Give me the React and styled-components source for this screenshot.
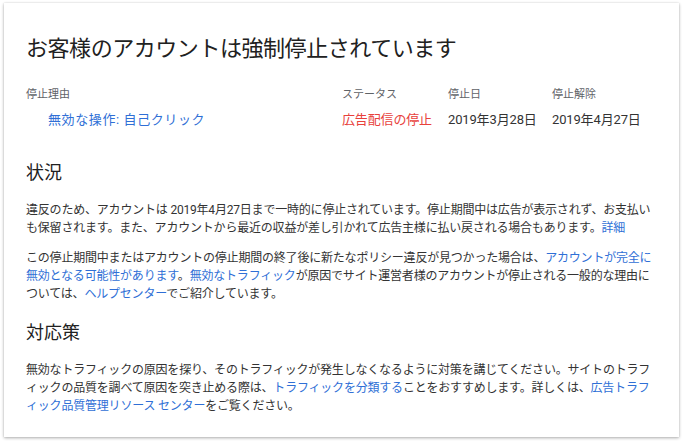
import React from "react";
import styled, { createGlobalStyle } from "styled-components";

const GlobalStyle = createGlobalStyle`
  html, body { margin: 0; padding: 0; background: #ffffff; }
  body {
    font-family: "Roboto", "Noto Sans CJK JP", "Noto Sans", sans-serif;
    color: #212121;
    -webkit-font-smoothing: antialiased;
  }
`;

const Page = styled.div`
  padding: 3px 5px 6px 4px;
`;

const Card = styled.section`
  background: #ffffff;
  box-shadow: 0 1px 3px rgba(0, 0, 0, 0.32), 0 0 1px rgba(0, 0, 0, 0.12);
  padding: 31px 10px 22px 22px;
`;

const Title = styled.h1`
  margin: 0;
  font-size: 22px;
  line-height: 30px;
  font-weight: 400;
  letter-spacing: -0.45px;
  color: #212121;
`;

const MetaGrid = styled.div`
  display: grid;
  grid-template-columns: 316px 106px 104px auto;
  row-gap: 8px;
  margin: 23px 0 32px;
`;

const Label = styled.div`
  font-size: 11px;
  line-height: 16px;
  color: #5f6368;
`;

const tones = {
  link: "#2f6fd6",
  alert: "#e8413c",
  plain: "#333333",
};

const Value = styled.div`
  font-size: 13px;
  line-height: 18px;
  letter-spacing: ${(p) => (p.$indent ? "0.6px" : "-0.15px")};
  color: ${(p) => tones[p.$tone || "plain"]};
  padding-left: ${(p) => (p.$indent ? "22px" : "0")};
  white-space: nowrap;
`;

const Heading = styled.h2`
  margin: 18px 0 16px;
  font-size: 18px;
  line-height: 24px;
  font-weight: 400;
  color: #212121;
`;

const Para = styled.p`
  margin: 0 0 12px;
  font-size: 12px;
  line-height: 18px;
  letter-spacing: -0.2px;
  color: #333333;
  white-space: nowrap;

  &:last-child {
    margin-bottom: 0;
  }
`;

const Link = styled.a`
  color: #2f6fd6;
  text-decoration: none;
  cursor: pointer;
`;

export default function App() {
  return (
    <>
      <GlobalStyle />
      <Page>
        <Card>
          <Title>お客様のアカウントは強制停止されています</Title>

          <MetaGrid>
            <Label>停止理由</Label>
            <Label>ステータス</Label>
            <Label>停止日</Label>
            <Label>停止解除</Label>
            <Value $tone="link" $indent>無効な操作: 自己クリック</Value>
            <Value $tone="alert">広告配信の停止</Value>
            <Value>2019年3月28日</Value>
            <Value>2019年4月27日</Value>
          </MetaGrid>

          <Heading>状況</Heading>
          <Para>
            違反のため、アカウントは 2019年4月27日まで一時的に停止されています。停止期間中は広告が表示されず、お支払い
            <br />
            も保留されます。また、アカウントから最近の収益が差し引かれて広告主様に払い戻される場合もあります。
            <Link>詳細</Link>
          </Para>
          <Para>
            この停止期間中またはアカウントの停止期間の終了後に新たなポリシー違反が見つかった場合は、
            <Link>アカウントが完全に</Link>
            <br />
            <Link>無効となる可能性があります</Link>。<Link>無効なトラフィック</Link>
            が原因でサイト運営者様のアカウントが停止される一般的な理由に
            <br />
            ついては、<Link>ヘルプセンター</Link>でご紹介しています。
          </Para>

          <Heading>対応策</Heading>
          <Para>
            無効なトラフィックの原因を探り、そのトラフィックが発生しなくなるように対策を講じてください。サイトのトラフ
            <br />
            ィックの品質を調べて原因を突き止める際は、<Link>トラフィックを分類する</Link>
            ことをおすすめします。詳しくは、<Link>広告トラフ</Link>
            <br />
            <Link>ィック品質管理リソース センター</Link>をご覧ください。
          </Para>
        </Card>
      </Page>
    </>
  );
}
